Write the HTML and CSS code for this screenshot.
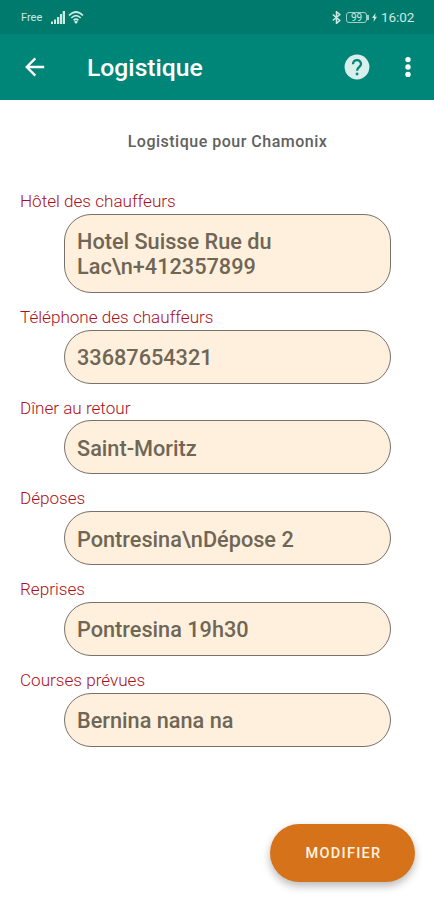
FILE: index.html
```html
<!DOCTYPE html>
<html lang="fr">
<head>
<meta charset="utf-8">
<title>Logistique</title>
<link rel="stylesheet" href="styles.css">
</head>
<body>
<div class="status">
  <span class="carrier">Free</span>
  <svg class="signal" width="14" height="13" viewBox="0 0 14 13" fill="#cce9e2"><path d="M0 10.500h2V13H0zM3 8.500h2V13H3zM6 6h2.300v7H6zM9 3h2v10H9zM11.700 0H14v13h-2.300z"/></svg>
  <svg class="wifi" width="16" height="13" viewBox="0 0 16 13" fill="none" stroke="#cce9e2" stroke-width="1.700"><path d="M1 4.500Q8-2.500 15 4.500M3.300 7Q8 2.300 12.700 7M5.600 9.300Q8 7 10.400 9.300"/><path d="M8 9.500l2 1.300L8 13l-2-2.200z" fill="#cce9e2" stroke="none"/></svg>
  <div class="status-right">
    <svg width="9" height="13" viewBox="0 0 9 13" fill="none" stroke="#cce9e2" stroke-width="1.500"><path d="M.8 3.500l7 6L4.500 12.300V.8L7.800 3.500l-7 6"/></svg>
    <span class="battery">99</span>
    <svg class="bolt" width="5" height="9" viewBox="0 0 5 9" fill="#cce9e2"><path d="M3.500 0L0 5h2L1.500 9 5 3.800H3z"/></svg>
    <span class="clock">16:02</span>
  </div>
</div>
<header class="appbar">
  <svg class="back" width="20" height="20" viewBox="0 0 20 20" fill="none" stroke="#fff" stroke-width="2.300"><path d="M19.200 10H2M10.300 1.400L1.700 10l8.600 8.600"/></svg>
  <h1>Logistique</h1>
  <svg class="help" width="26" height="26" viewBox="0 0 26 26"><circle cx="13" cy="13" r="12.400" fill="#d9efeb"/><path d="M9 10.200C9 4.800 17 4.800 17 10c0 3.200-4 3.300-4 6.800" fill="none" stroke="#008678" stroke-width="2.300"/><path d="M11.800 18.700h2.500v2.500h-2.500z" fill="#008678"/></svg>
  <svg class="more" width="6" height="22" viewBox="0 0 6 22" fill="#fff"><circle cx="3" cy="3.600" r="2.700"/><circle cx="3" cy="11" r="2.700"/><circle cx="3" cy="18.400" r="2.700"/></svg>
</header>
<main>
  <h2>Logistique pour Chamonix</h2>
  <section class="field"><div class="label">Hôtel des chauffeurs</div><div class="value">Hotel Suisse Rue du<br>Lac\n+412357899</div></section>
  <section class="field"><div class="label">Téléphone des chauffeurs</div><div class="value">33687654321</div></section>
  <section class="field"><div class="label">Dîner au retour</div><div class="value">Saint-Moritz</div></section>
  <section class="field"><div class="label">Déposes</div><div class="value">Pontresina\nDépose 2</div></section>
  <section class="field"><div class="label">Reprises</div><div class="value">Pontresina 19h30</div></section>
  <section class="field"><div class="label">Courses prévues</div><div class="value">Bernina nana na</div></section>
</main>
<button class="edit">MODIFIER</button>
</body>
</html>
```
FILE: styles.css
```css
* { box-sizing: border-box; }
body {
  margin: 0;
  height: 900px;
  overflow: hidden;
  background: #fff;
  font-family: Roboto, sans-serif;
  display: flex;
  flex-direction: column;
}
svg { display: block; flex: none; }
.status {
  height: 34px;
  flex: none;
  background: #007a6c;
  color: #cce9e2;
  display: flex;
  align-items: center;
  padding: 0 19px 0 21px;
}
.carrier { font-size: 11px; width: 30px; }
.wifi { margin-left: 3px; }
.status-right { margin-left: auto; display: flex; align-items: center; }
.battery {
  position: relative;
  width: 21px;
  height: 11px;
  margin-left: 5px;
  border: 1px solid #9fd0c7;
  border-radius: 3px;
  font-size: 10px;
  line-height: 9px;
  text-align: center;
}
.battery::after {
  content: "";
  position: absolute;
  right: -3px;
  top: 2px;
  width: 2px;
  height: 5px;
  background: #9fd0c7;
}
.bolt { margin-left: 5px; }
.clock { font-size: 13.500px; margin-left: 4px; width: 34px; white-space: nowrap; letter-spacing: -.1px; }
.appbar {
  height: 66px;
  flex: none;
  background: #008678;
  color: #fff;
  display: flex;
  align-items: center;
  padding: 0 23px 0 25px;
}
h1 { margin: 2px auto 0 42px; font-size: 24.700px; line-height: 30px; font-weight: 500; }
.more { margin-left: 35px; }
main { padding: 31px 43px 0 20px; }
h2 {
  margin: 0 -23px 38px 0;
  padding-left: 21px;
  text-align: center;
  font-size: 16px;
  line-height: 22px;
  font-weight: 500;
  letter-spacing: .5px;
  color: #616161;
}
.field { margin-bottom: 14px; }
.label {
  padding-top: 1px;
  font-size: 17.100px;
  line-height: 18px;
  font-weight: 300;
  color: #ac0e20;
  margin-bottom: 3.800px;
}
.value {
  margin-left: 44px;
  border: 1px solid #77716a;
  border-radius: 27px;
  background: #fff0dd;
  color: #6f6655;
  padding: 14.500px 12px 12.500px;
  font-size: 21.700px;
  line-height: 25px;
  font-weight: 500;
}
.edit {
  margin: auto 19px 18.500px auto;
  padding: 2px 0 0 2px;
  width: 145px;
  height: 58px;
  flex: none;
  border: 0;
  border-radius: 29px;
  background: #d67219;
  color: #fff3e3;
  font: 500 14.500px Roboto, sans-serif;
  letter-spacing: 1.300px;
  box-shadow: 0 4px 8px rgba(0,0,0,.28);
}
```
